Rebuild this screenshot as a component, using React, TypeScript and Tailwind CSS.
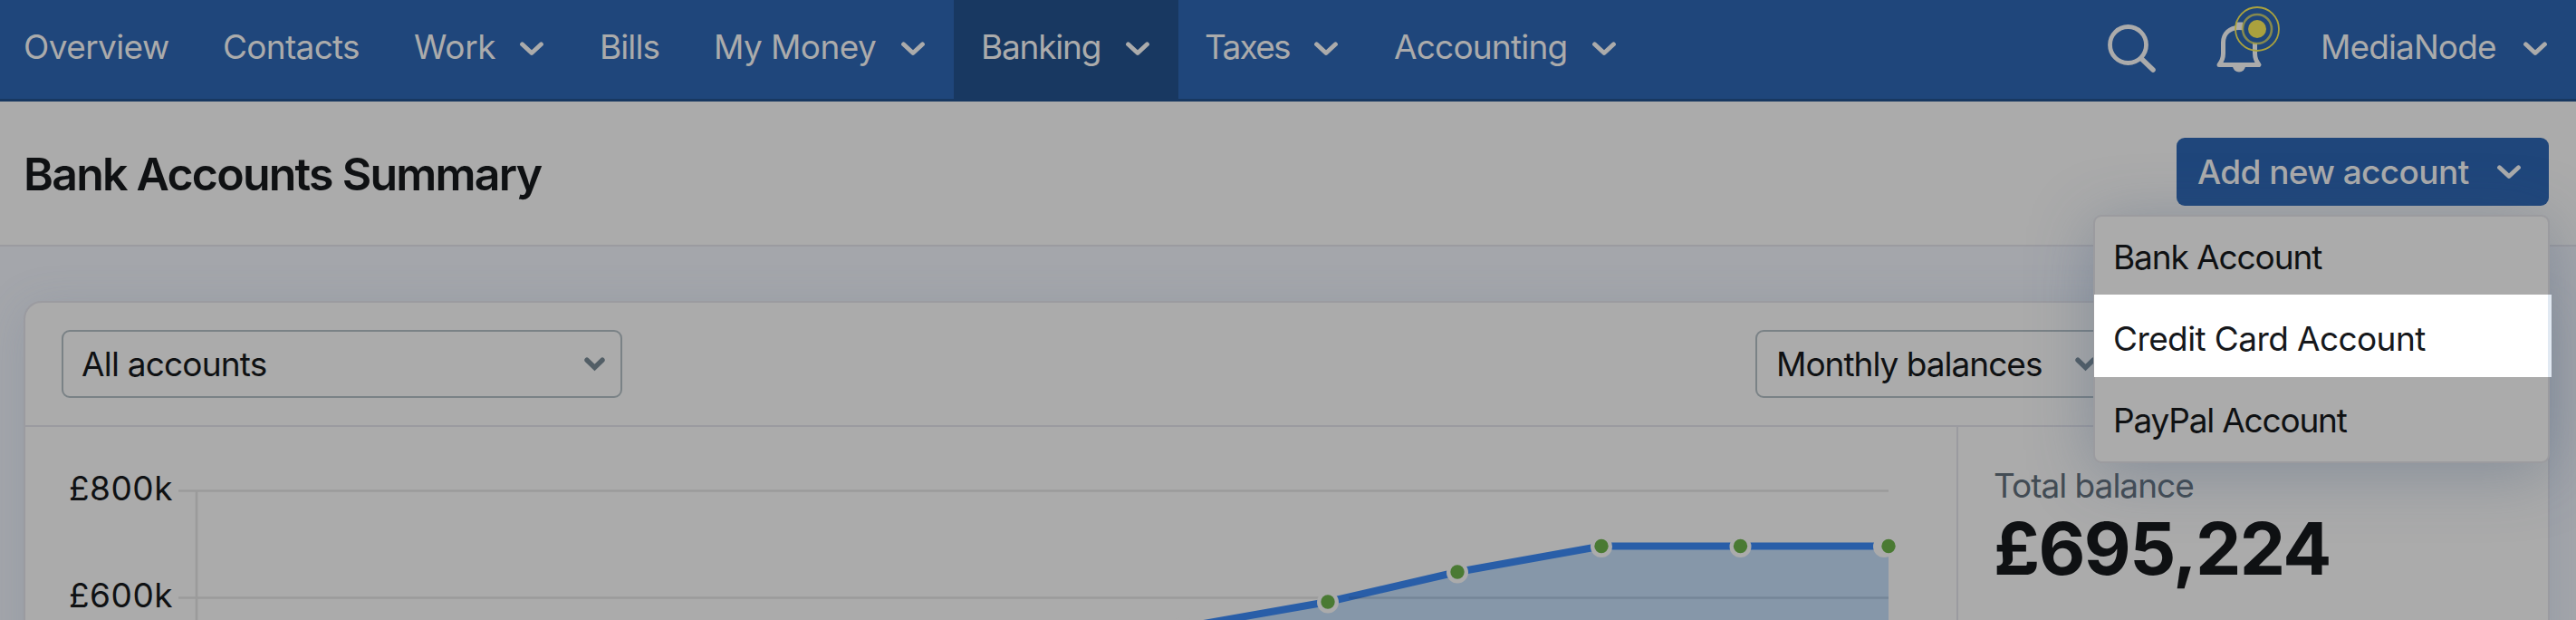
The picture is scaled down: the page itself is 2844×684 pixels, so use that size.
import React from 'react';

const navItems = [
  { label: 'Overview', menu: false, box: 'pl-[24px] w-[241px]', text: 'tracking-[-0.6px]' },
  { label: 'Contacts', menu: false, box: 'pl-[3px] w-[215px]', text: 'tracking-[-0.7px]' },
  { label: 'Work', menu: true, box: 'w-[205px]', text: '-ml-px w-[119px] tracking-[-0.3px]' },
  { label: 'Bills', menu: false, box: 'w-[126px]', text: '-ml-px tracking-[-0.9px]' },
  { label: 'My Money', menu: true, box: 'w-[266px]', text: '-ml-px w-[209px] tracking-[-0.6px]' },
  { label: 'Banking', menu: true, active: true, box: 'pl-[28px] w-[248px]', text: 'w-[162px] tracking-[-1.2px]' },
  { label: 'Taxes', menu: true, box: 'pl-[27px] w-[235px]', text: 'w-[123px] tracking-[-1.7px]' },
  { label: 'Accounting', menu: true, box: 'pl-px w-[300px]', text: 'w-[221px] tracking-[-0.8px]' },
];

const gridLines = [
  { label: '£800k', y: 70.5 },
  { label: '£600k', y: 188.5 },
];

// the line starts below the visible part of the chart
const points = [
  { x: 1277, y: 221 },
  { x: 1437, y: 193 },
  { x: 1580, y: 160 },
  { x: 1739, y: 131.5 },
  { x: 1892.5, y: 131.5 },
  { x: 2056, y: 131.5 },
];

const linePath = points.map((p) => `${p.x},${p.y}`).join(' ');

function Chevron({ className = '' }: { className?: string }) {
  return (
    <svg className={`shrink-0 w-[26px] h-[16px] ${className}`} viewBox="0 0 26 16" fill="none">
      <path d="M2.5 2.8 L13 12.6 L23.5 2.8" stroke="currentColor" strokeWidth="4.8" strokeLinecap="round" strokeLinejoin="round" />
    </svg>
  );
}

function SelectChevron() {
  return (
    <svg className="shrink-0 w-[23px] h-[16px] text-[#525e66]" viewBox="0 0 23 16" fill="none">
      <path d="M3 3.2 L11.5 11.5 L20 3.2" stroke="currentColor" strokeWidth="5.4" strokeLinecap="round" />
    </svg>
  );
}

function SearchIcon() {
  return (
    <svg className="w-[60px] h-[60px]" viewBox="0 0 60 60" fill="none" stroke="#ababab">
      <circle cx="25.5" cy="25.5" r="20" strokeWidth="4.8" />
      <path d="M40.5 41 L53 53" strokeWidth="5.6" strokeLinecap="round" />
    </svg>
  );
}

function BellIcon() {
  return (
    <svg className="w-[80px] h-[90px]" viewBox="0 0 80 90" fill="none">
      <path
        d="M10 71.5 C13.5 67 14.5 64 14.5 59 V47 C14.5 37 21.5 30.5 32 30.5 C42.5 30.5 49.5 37 49.5 47 V59 C49.5 64 50.5 67 54 71.5 Z"
        stroke="#ababab"
        strokeWidth="5"
        strokeLinejoin="round"
      />
      <path d="M32 24.5 V31" stroke="#ababab" strokeWidth="8" />
      <path d="M25 73 A7 6.5 0 0 0 39 73 Z" fill="#ababab" />
      <circle cx="52" cy="32" r="16" fill="#1f467b" stroke="#a8a040" strokeOpacity="0.75" strokeWidth="2.6" />
      <circle cx="52" cy="32" r="24" stroke="#aaa23e" strokeWidth="1.8" />
      <circle cx="52" cy="32" r="10" fill="#aaa13e" />
    </svg>
  );
}

function Navbar() {
  return (
    <nav className="flex h-[112px] bg-[#1f467b] border-b-[3px] border-[#183861] text-[#ababab]">
      {navItems.map((item) => (
        <div
          key={item.label}
          className={`flex items-center pb-[7px] ${item.active ? 'bg-[#183861]' : ''} ${item.box}`}
        >
          <span className={`pl-[2px] whitespace-nowrap ${item.text}`}>{item.label}</span>
          {item.menu && <Chevron className="mt-[6px]" />}
        </div>
      ))}
      <div className="ml-auto flex">
        <div className="mt-[24px] mr-[56px]">
          <SearchIcon />
        </div>
        <div className="mr-[42px]">
          <BellIcon />
        </div>
        <div className="flex items-center pb-[7px] mr-[32px]">
          <span className="w-[224px] whitespace-nowrap tracking-[-0.9px]">MediaNode</span>
          <Chevron className="mt-[6px]" />
        </div>
      </div>
    </nav>
  );
}

function AccountMenu() {
  return (
    <div className="absolute z-10 right-[29px] top-[125px] w-[504px] h-[274px] rounded-[9px] border-2 border-[#9b9b9f] bg-[#ababab] text-[#0f1113] shadow-[0_10px_70px_rgba(60,85,120,0.36)]">
      <div className="flex items-center h-[86px] pt-[3px] pl-[20px] tracking-[-1.1px]">Bank Account</div>
      <div className="flex items-center h-[91px] pt-[6px] -ml-px w-[505px] pl-[21px] bg-white border-r-[4px] border-[#e1e9f2] text-[#16181b] tracking-[-0.6px]">
        Credit Card Account
      </div>
      <div className="flex items-center h-[92px] pt-[3px] pl-[20px] tracking-[-1.2px]">PayPal Account</div>
    </div>
  );
}

function BalanceChart() {
  return (
    <svg className="shrink-0 w-[2131px] h-[213px]" viewBox="0 0 2131 213">
      {gridLines.map((g) => (
        <g key={g.label}>
          <text x="47" y={g.y + 10.5} fontSize="37" letterSpacing="0.5" fill="#0f1113">{g.label}</text>
          <path d={`M168 ${g.y} H2056`} stroke="#9b9b9b" strokeWidth="2.5" />
        </g>
      ))}
      <path d="M188 70 V213" stroke="#9b9b9b" strokeWidth="2.5" />
      <polygon points={`1277,240 ${linePath} 2056,240`} fill="#8697a9" />
      <polyline points={linePath} fill="none" stroke="#295ea8" strokeWidth="8" />
      <path d="M1460 188.5 H2056" stroke="#1d2c3f" strokeOpacity="0.16" strokeWidth="2.5" />
      {points.map((p, i) => {
        // last ring sits a little left of its dot
        const ringX = i === points.length - 1 ? p.x - 5 : p.x;
        return (
          <g key={p.x}>
            <circle cx={ringX} cy={p.y + 0.5} r="12" fill="#ababab" />
            <circle cx={p.x} cy={p.y} r="7.7" fill="#4a7a33" />
          </g>
        );
      })}
    </svg>
  );
}

export default function App() {
  return (
    <div className="relative w-[2844px] h-[684px] overflow-hidden bg-[#a4a6ab] font-['Inter',sans-serif] text-[37px] leading-none">
      <Navbar />

      <header className="relative flex items-center justify-between h-[160px] pl-[26px] pr-[30px] bg-[#ababab] border-b-2 border-[#9b9ba0]">
        <h1 className="pt-[2px] text-[50px] font-semibold tracking-[-1.75px] text-[#0f1113]">Bank Accounts Summary</h1>
        <button className="flex items-center w-[411px] h-[75px] mb-[3px] pl-[23px] rounded-[9px] bg-[#1f467b] text-[#ababab] font-medium">
          <span className="w-[331px] text-left whitespace-nowrap tracking-[-0.6px]">Add new account</span>
          <Chevron />
        </button>
        <AccountMenu />
      </header>

      <section className="ml-[26px] mt-[60px] w-[2789px] h-[400px] rounded-t-[20px] border-2 border-[#9b9ba0] bg-[#ababab] shadow-[0_8px_50px_rgba(90,115,145,0.2)]">
        <div className="flex items-center h-[137px] pl-[40px] border-b-2 border-[#9b9ba0] text-[#0f1113]">
          <div className="flex items-center w-[619px] h-[75px] pl-[20px] rounded-[9px] border-2 border-[#7a8286]">
            <span className="w-[555px] whitespace-nowrap tracking-[-0.8px]">All accounts</span>
            <SelectChevron />
          </div>
          <div className="ml-[1251px] flex items-center w-[395px] h-[75px] pl-[21px] rounded-[9px] border-2 border-[#7a8286]">
            <span className="w-[330px] whitespace-nowrap tracking-[-1px]">Monthly balances</span>
            <SelectChevron />
          </div>
        </div>
        <div className="flex pl-px">
          <BalanceChart />
          <div className="flex-1 h-[260px] border-l-2 border-[#9b9ba0] pl-[39px] pt-[43px]">
            <p className="h-[44px] leading-[44px] tracking-[-1px] text-[#434c54]">Total balance</p>
            <p className="mt-[7px] text-[80px] leading-[80px] font-bold tracking-[-1.6px] text-[#0f1113]">£695,224</p>
          </div>
        </div>
      </section>
    </div>
  );
}
